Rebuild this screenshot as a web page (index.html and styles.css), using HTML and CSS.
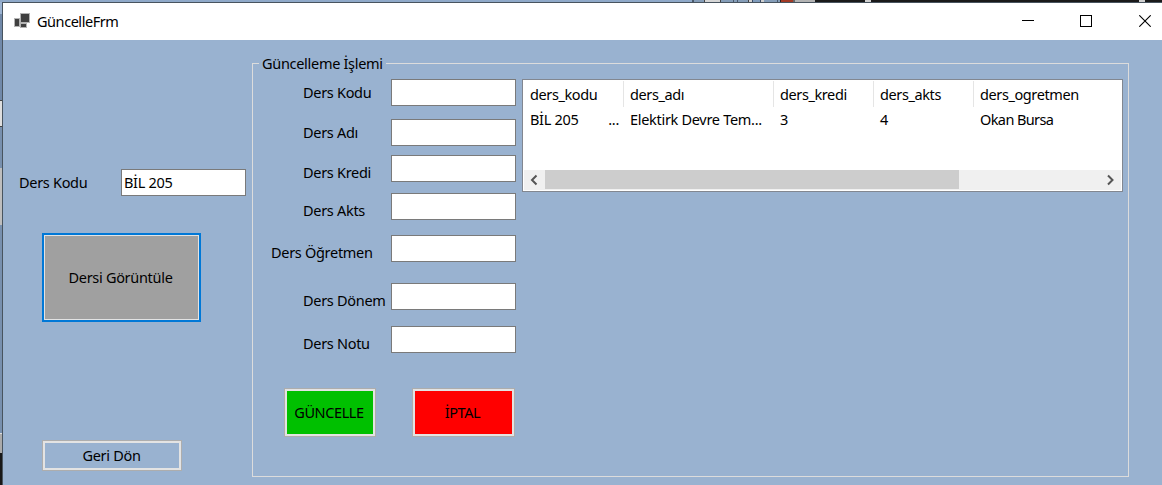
FILE: index.html
```html
<!DOCTYPE html>
<html lang="tr">
<head>
<meta charset="utf-8">
<title>GüncelleFrm</title>
<link rel="stylesheet" href="styles.css">
</head>
<body>
<div class="desktop">
  <div class="backdrop-top"></div>
  <div class="backdrop-row">
    <div class="backdrop-left"></div>
    <main class="window">
      <header class="titlebar">
        <svg class="app-icon" width="16" height="16" viewBox="0 0 16 16"><g fill="#404040" stroke="#b4b4b4" stroke-width="1"><rect x="0.5" y="5.5" width="5" height="8"/><rect x="6.5" y="0.5" width="9" height="9"/><rect x="6.5" y="10.5" width="6" height="4"/></g></svg>
        <span class="title">GüncelleFrm</span>
        <div class="controls">
          <svg width="12" height="12" viewBox="0 0 12 12"><path d="M0 5.5H12" stroke="#000"/></svg>
          <svg width="12" height="12" viewBox="0 0 12 12"><rect x="0.5" y="0.5" width="11" height="11" fill="none" stroke="#000"/></svg>
          <svg class="close" width="12" height="12" viewBox="0 0 12 12"><path d="M0.3 0.3L11.7 11.7M11.7 0.3L0.3 11.7" stroke="#000" stroke-width="1.1"/></svg>
        </div>
      </header>
      <div class="content">
        <section class="search">
          <div class="search-row"><label>Ders Kodu</label><input class="box" value="BİL 205"></div>
          <button class="btn show">Dersi Görüntüle</button>
          <button class="btn back">Geri Dön</button>
        </section>
        <section class="group">
          <div class="legend"><span class="legend-text">Güncelleme İşlemi</span></div>
          <div class="group-body">
            <div class="form">
              <div class="fields">
                <div class="labels">
                  <label>Ders Kodu</label><label>Ders Adı</label><label>Ders Kredi</label><label>Ders Akts</label><label class="wide">Ders Öğretmen</label><label>Ders Dönem</label><label>Ders Notu</label>
                </div>
                <div class="inputs">
                  <input class="box"><input class="box"><input class="box"><input class="box"><input class="box"><input class="box"><input class="box">
                </div>
              </div>
              <div class="actions">
                <button class="btn update">GÜNCELLE</button>
                <button class="btn cancel">İPTAL</button>
              </div>
            </div>
            <div class="list">
              <div class="row head"><span>ders_kodu</span><span>ders_adı</span><span>ders_kredi</span><span>ders_akts</span><span class="ogretmen">ders_ogretmen</span></div>
              <div class="row"><span class="code">BİL 205<i>...</i></span><span class="name">Elektirk Devre Tem...</span><span>3</span><span>4</span><span class="teacher">Okan Bursa</span></div>
              <div class="scrollbar">
                <svg width="21" height="20" viewBox="0 0 21 20"><path d="M12.5 5.5L8 10L12.5 14.5" fill="none" stroke="#555" stroke-width="2"/></svg>
                <div class="thumb"></div>
                <svg class="right" width="21" height="20" viewBox="0 0 21 20"><path d="M8 5.5L12.5 10L8 14.5" fill="none" stroke="#555" stroke-width="2"/></svg>
              </div>
            </div>
          </div>
        </section>
      </div>
    </main>
  </div>
</div>
</body>
</html>
```
FILE: styles.css
```css
* { box-sizing: border-box; }
body { margin: 0; overflow: hidden; }
body, input, button {
  font-family: "Noto Sans", sans-serif;
  font-size: 14.5px;
  letter-spacing: -0.3px;
  line-height: 20px;
  color: #000;
  white-space: nowrap;
}
.desktop { width: 1162px; height: 485px; display: flex; flex-direction: column; }
.backdrop-top {
  height: 2px;
  background: linear-gradient(90deg, #8fa9c9 692px, #4a596b 692px 694px, #859db8 694px 704px, #444 704px 705px, #d6d6d6 705px 720px, #444 720px 721px, #859db8 721px 733px, #4a596b 733px 734px, #859db8 734px 737px, #4a596b 737px 738px, #859db8 738px 748px, #444 748px 749px, #cfcfcf 749px 752px, #3b4b66 752px 753px, #7f9bbb 753px 760px, #3b4b66 760px 761px, #cfcfcf 761px 764px, #859db8 764px 777px, #4a596b 777px 778px, #859db8 778px 780px, #222 780px 781px, #a23a25 781px 793px, #666 793px 795px, #b3b3b3 795px 815px, #1a1a1a 815px 865px, #d0d0d0 865px 871px, #1a1a1a 871px 1139px, #d0d0d0 1139px 1145px, #1a1a1a 1145px);
}
.backdrop-row { flex: 1; display: flex; }
.backdrop-left {
  width: 2px;
  background: linear-gradient(#9bb3d2 12px, #7189a9 12px 98px, #444 98px 99px, #dedede 99px 124px, #444 124px 125px, #7890ae 125px 166px, #bebebe 166px 223px, #7890ae 223px 431px, #dedede 431px 432px, #aaa 432px 451px, #181818 451px);
}
.window {
  width: 1160px;
  height: 483px;
  border: solid #48545f;
  border-width: 1px 0 0 1px;
  background: #99b2d0;
}
.titlebar { height: 37px; background: #fff; display: flex; align-items: center; padding: 0 11px 1px; }
.title { margin-left: 7px; letter-spacing: -0.45px; }
.controls { margin-left: auto; display: flex; gap: 46px; }
.close { margin-left: 1px; }
.content { display: flex; }
.search { width: 249px; padding: 129px 0 0 16px; }
.search-row { display: flex; align-items: center; justify-content: space-between; padding-right: 6px; }
.search-row label { padding-bottom: 2px; }
.box {
  display: block;
  width: 125px;
  height: 27px;
  border: 1px solid #7a7a7a;
  background: #fff;
  padding: 0 2px 2px;
  outline: 0;
}
.btn {
  display: block;
  padding: 0 0 2px;
  border: 1px solid #adadad;
  box-shadow: inset 0 0 0 2px #e3e3e3;
  background: none;
}
.show { width: 159px; height: 89px; margin: 37px 0 0 23px; border: 2px solid #0078d7; background: #a0a0a0; box-shadow: inset 0 0 0 1px #e3e3e3; padding-right: 2px; }
.back { width: 140px; height: 31px; margin: 118px 0 0 23px; padding: 0 1px 1px 0; }
.group { width: 877px; height: 414px; margin-top: 23px; border: solid #dcdcdc; border-width: 0 1px 1px; }
.legend { height: 1px; display: flex; align-items: center; }
.legend::before, .legend::after { content: ""; height: 1px; background: #dcdcdc; }
.legend::before { width: 6px; }
.legend::after { flex: 1; }
.legend-text { width: 127px; padding: 0 0 2px 3px; }
.group-body { display: flex; gap: 6px; padding-top: 15px; }
.form { width: 263px; }
.fields { display: flex; }
.labels { width: 138px; padding: 3px 0 0 50px; display: grid; grid-template-rows: 40px 40px 38px 42px 48px 43px 20px; }
.wide { margin-left: -32px; }
.inputs { display: grid; grid-template-rows: 40px 36px 38px 42px 48px 43px 27px; }
.actions { display: flex; gap: 36px; padding: 35px 0 0 31px; }
.actions .btn { height: 49px; padding-right: 2px; letter-spacing: -0.4px; }
.update { width: 92px; background: #00c000; }
.cancel { width: 103px; background: #f00; }
.list { width: 601px; height: 113px; border: 1px solid #828790; background: #fff; padding: 1px; display: flex; flex-direction: column; }
.row { display: grid; grid-template-columns: 100px 150px 100px 100px 147px; height: 23px; align-items: center; }
.row span { padding-left: 6px; }
.row.head { height: 26px; letter-spacing: -0.4px; }
.head span { height: 26px; line-height: 27px; border-right: 1px solid #e5e5e5; }
.head .ogretmen { border-right: 0; }
.teacher { letter-spacing: -0.6px; }
.row .code { display: flex; justify-content: space-between; padding-right: 5px; }
.code i { font-style: normal; }
.scrollbar { display: flex; height: 20px; margin-top: auto; background: #f0f0f0; }
.thumb { width: 414px; height: 19px; background: #cdcdcd; }
.right { margin-left: auto; }
```
